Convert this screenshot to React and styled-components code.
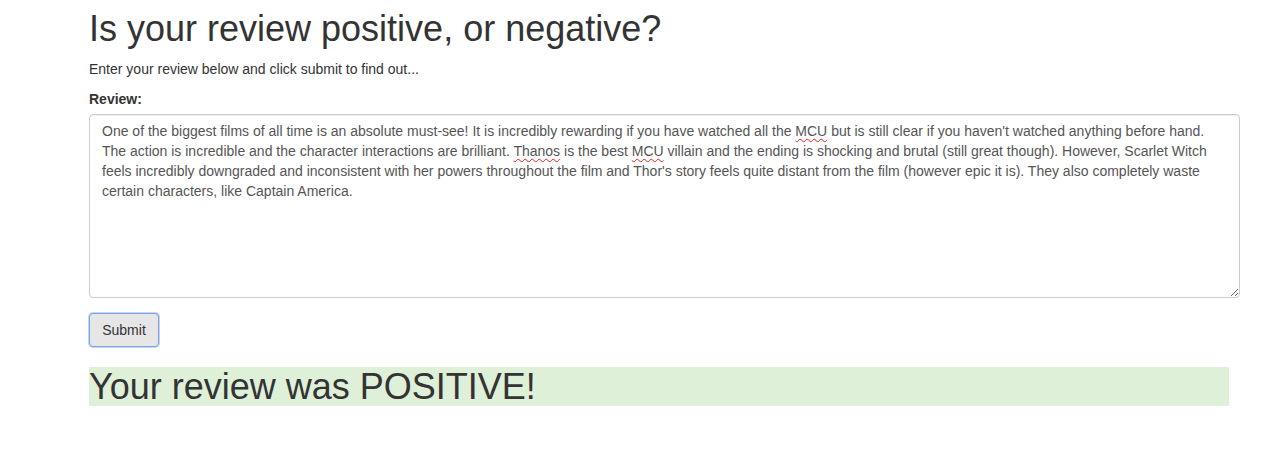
import React from "react";
import styled, { createGlobalStyle } from "styled-components";

const GlobalStyle = createGlobalStyle`
  html, body {
    margin: 0;
    padding: 0;
    background: #fff;
  }
  body {
    font-family: "Liberation Sans", Arial, Helvetica, sans-serif;
    font-size: 14px;
    line-height: 20px;
    color: #333;
  }
`;

const Page = styled.main`
  padding: 9px 37px 0 89px;
  display: flex;
  flex-direction: column;
  align-items: flex-start;
`;

const Title = styled.h1`
  margin: 0 0 10px;
  font-size: 36px;
  font-weight: 500;
  line-height: 1.1;
  color: #333;
`;

const Lead = styled.p`
  margin: 0 0 10px;
`;

const Label = styled.label`
  display: block;
  font-weight: bold;
  margin-bottom: 5px;
`;

const ReviewBox = styled.div`
  box-sizing: border-box;
  width: 1151px;
  height: 184px;
  padding: 6px 12px;
  border: 1px solid #ccc;
  border-radius: 4px;
  box-shadow: inset 0 1px 1px rgba(0, 0, 0, 0.075);
  color: #555;
  font-size: 14px;
  line-height: 20px;
  overflow: auto;
  resize: both;
`;

const Misspelt = styled.span`
  text-decoration: underline wavy #e02020;
  text-decoration-thickness: 1px;
  text-underline-offset: 2px;
`;

const SubmitButton = styled.button`
  margin-top: 15px;
  box-sizing: border-box;
  width: 70px;
  height: 34px;
  padding: 6px 12px;
  font-family: inherit;
  font-size: 14px;
  line-height: 20px;
  color: #333;
  background: #e6e6e6;
  border: 1px solid #7da2e3;
  border-radius: 4px;
  box-shadow: 0 0 0 1px rgba(125, 162, 227, 0.45);
  cursor: pointer;
`;

const Result = styled.div`
  margin-top: 20px;
  width: 1140px;
  background: ${(p) => (p.$positive ? "#dff0d8" : "#f2dede")};
  font-size: 36px;
  line-height: 1.1;
  color: #333;
`;

export default function App() {
  return (
    <>
      <GlobalStyle />
      <Page>
        <Title>Is your review positive, or negative?</Title>
        <Lead>Enter your review below and click submit to find out...</Lead>
        <Label>Review:</Label>
        <ReviewBox>
          One of the biggest films of all time is an absolute must-see! It is
          incredibly rewarding if you have watched all the <Misspelt>MCU</Misspelt>{" "}
          but is still clear if you haven't watched anything before hand. The
          action is incredible and the character interactions are brilliant.{" "}
          <Misspelt>Thanos</Misspelt> is the best <Misspelt>MCU</Misspelt>{" "}
          villain and the ending is shocking and brutal (still great though).
          However, Scarlet Witch feels incredibly downgraded and inconsistent
          with her powers throughout the film and Thor's story feels quite
          distant from the film (however epic it is). They also completely waste
          certain characters, like Captain America.
        </ReviewBox>
        <SubmitButton type="button">Submit</SubmitButton>
        <Result $positive>Your review was POSITIVE!</Result>
      </Page>
    </>
  );
}
